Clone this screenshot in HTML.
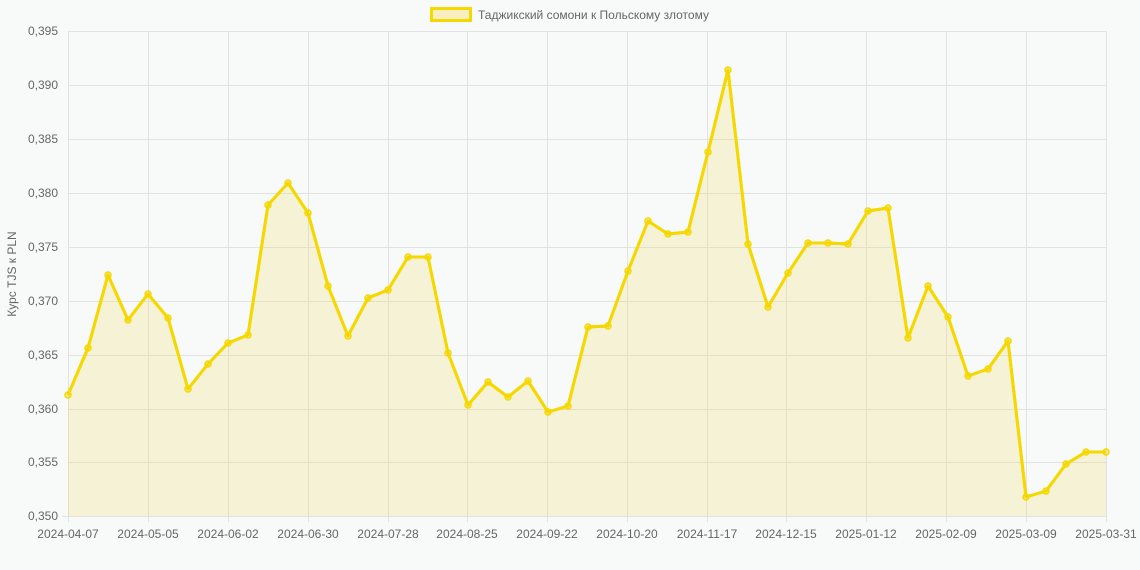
<!DOCTYPE html>
<html><head><meta charset="utf-8"><style>
html,body{margin:0;padding:0;background:#f8f9f9;}
svg{display:block;font-family:"Liberation Sans",sans-serif;}
</style></head><body>
<svg width="1140" height="570" viewBox="0 0 1140 570" xmlns="http://www.w3.org/2000/svg">
<rect width="1140" height="570" fill="#f8f9f9"/>
<g stroke="#e2e2e2" stroke-width="1">
<line x1="68" y1="31.5" x2="1106" y2="31.5"/><line x1="68" y1="85.5" x2="1106" y2="85.5"/>
<line x1="68" y1="139.5" x2="1106" y2="139.5"/><line x1="68" y1="193.5" x2="1106" y2="193.5"/>
<line x1="68" y1="247.5" x2="1106" y2="247.5"/><line x1="68" y1="301.5" x2="1106" y2="301.5"/>
<line x1="68" y1="355.5" x2="1106" y2="355.5"/><line x1="68" y1="409.5" x2="1106" y2="409.5"/>
<line x1="68" y1="462.5" x2="1106" y2="462.5"/><line x1="62" y1="516.5" x2="1106" y2="516.5"/>
<line x1="68.5" y1="31" x2="68.5" y2="522"/><line x1="148.5" y1="31" x2="148.5" y2="522"/>
<line x1="228.5" y1="31" x2="228.5" y2="522"/><line x1="308.5" y1="31" x2="308.5" y2="522"/>
<line x1="388.5" y1="31" x2="388.5" y2="522"/><line x1="467.5" y1="31" x2="467.5" y2="522"/>
<line x1="547.5" y1="31" x2="547.5" y2="522"/><line x1="627.5" y1="31" x2="627.5" y2="522"/>
<line x1="707.5" y1="31" x2="707.5" y2="522"/><line x1="786.5" y1="31" x2="786.5" y2="522"/>
<line x1="866.5" y1="31" x2="866.5" y2="522"/><line x1="946.5" y1="31" x2="946.5" y2="522"/>
<line x1="1026.5" y1="31" x2="1026.5" y2="522"/><line x1="1106.5" y1="31" x2="1106.5" y2="522"/>
</g>
<g font-size="12" fill="#666" text-anchor="end">
<text x="58" y="35">0,395</text><text x="58" y="89">0,390</text><text x="58" y="143">0,385</text>
<text x="58" y="197">0,380</text><text x="58" y="251">0,375</text><text x="58" y="305">0,370</text>
<text x="58" y="359">0,365</text><text x="58" y="413">0,360</text><text x="58" y="466">0,355</text>
<text x="58" y="520">0,350</text>
</g>
<g font-size="12" fill="#666" text-anchor="middle">
<text x="68" y="538">2024-04-07</text><text x="148" y="538">2024-05-05</text><text x="228" y="538">2024-06-02</text>
<text x="308" y="538">2024-06-30</text><text x="388" y="538">2024-07-28</text><text x="467" y="538">2024-08-25</text>
<text x="547" y="538">2024-09-22</text><text x="627" y="538">2024-10-20</text><text x="707" y="538">2024-11-17</text>
<text x="786" y="538">2024-12-15</text><text x="866" y="538">2025-01-12</text><text x="946" y="538">2025-02-09</text>
<text x="1026" y="538">2025-03-09</text><text x="1106" y="538">2025-03-31</text>
</g>
<text transform="translate(16,274) rotate(-90)" font-size="12" fill="#666" text-anchor="middle">Курс TJS к PLN</text>
<rect x="431.5" y="8.5" width="39" height="12" fill="#f7efc0" stroke="#f5d800" stroke-width="3"/>
<text x="478" y="19" font-size="12" fill="#666">Таджикский сомони к Польскому злотому</text>
<path id="ln" d="M68,395 L88,348 L108,275 L128,320 L148,294 L168,318 L188,389 L208,364 L228,343 L248,335 L268,205 L288,183 L308,213 L328,286 L348,336 L368,298 L388,290 L408,257 L428,257 L448,353 L468,405 L488,382 L508,397 L528,381 L548,412 L568,406 L588,327 L608,326 L628,271 L648,221 L668,234 L688,232 L708,152 L728,70 L748,244 L768,307 L788,273 L808,243 L828,243 L848,244 L868,211 L888,208 L908,338 L928,286 L948,317 L968,376 L988,369 L1008,341 L1026,497 L1046,491 L1066,464 L1086,452 L1106,452" fill="none" stroke="#f5d800" stroke-width="3" stroke-linejoin="round"/>
<path d="M68,395 L88,348 L108,275 L128,320 L148,294 L168,318 L188,389 L208,364 L228,343 L248,335 L268,205 L288,183 L308,213 L328,286 L348,336 L368,298 L388,290 L408,257 L428,257 L448,353 L468,405 L488,382 L508,397 L528,381 L548,412 L568,406 L588,327 L608,326 L628,271 L648,221 L668,234 L688,232 L708,152 L728,70 L748,244 L768,307 L788,273 L808,243 L828,243 L848,244 L868,211 L888,208 L908,338 L928,286 L948,317 L968,376 L988,369 L1008,341 L1026,497 L1046,491 L1066,464 L1086,452 L1106,452 L1106,516 L68,516Z" fill="rgba(240,220,90,0.22)" stroke="none"/>
<use href="#ln"/>
<g fill="rgba(245,216,0,0.35)" stroke="#f5d800" stroke-width="1.5">
<circle cx="68" cy="395" r="3"/><circle cx="88" cy="348" r="3"/><circle cx="108" cy="275" r="3"/><circle cx="128" cy="320" r="3"/><circle cx="148" cy="294" r="3"/><circle cx="168" cy="318" r="3"/><circle cx="188" cy="389" r="3"/><circle cx="208" cy="364" r="3"/><circle cx="228" cy="343" r="3"/><circle cx="248" cy="335" r="3"/><circle cx="268" cy="205" r="3"/><circle cx="288" cy="183" r="3"/><circle cx="308" cy="213" r="3"/><circle cx="328" cy="286" r="3"/><circle cx="348" cy="336" r="3"/><circle cx="368" cy="298" r="3"/><circle cx="388" cy="290" r="3"/><circle cx="408" cy="257" r="3"/><circle cx="428" cy="257" r="3"/><circle cx="448" cy="353" r="3"/><circle cx="468" cy="405" r="3"/><circle cx="488" cy="382" r="3"/><circle cx="508" cy="397" r="3"/><circle cx="528" cy="381" r="3"/><circle cx="548" cy="412" r="3"/><circle cx="568" cy="406" r="3"/><circle cx="588" cy="327" r="3"/><circle cx="608" cy="326" r="3"/><circle cx="628" cy="271" r="3"/><circle cx="648" cy="221" r="3"/><circle cx="668" cy="234" r="3"/><circle cx="688" cy="232" r="3"/><circle cx="708" cy="152" r="3"/><circle cx="728" cy="70" r="3"/><circle cx="748" cy="244" r="3"/><circle cx="768" cy="307" r="3"/><circle cx="788" cy="273" r="3"/><circle cx="808" cy="243" r="3"/><circle cx="828" cy="243" r="3"/><circle cx="848" cy="244" r="3"/><circle cx="868" cy="211" r="3"/><circle cx="888" cy="208" r="3"/><circle cx="908" cy="338" r="3"/><circle cx="928" cy="286" r="3"/><circle cx="948" cy="317" r="3"/><circle cx="968" cy="376" r="3"/><circle cx="988" cy="369" r="3"/><circle cx="1008" cy="341" r="3"/><circle cx="1026" cy="497" r="3"/><circle cx="1046" cy="491" r="3"/><circle cx="1066" cy="464" r="3"/><circle cx="1086" cy="452" r="3"/><circle cx="1106" cy="452" r="3"/>
</g>
</svg>
</body></html>
